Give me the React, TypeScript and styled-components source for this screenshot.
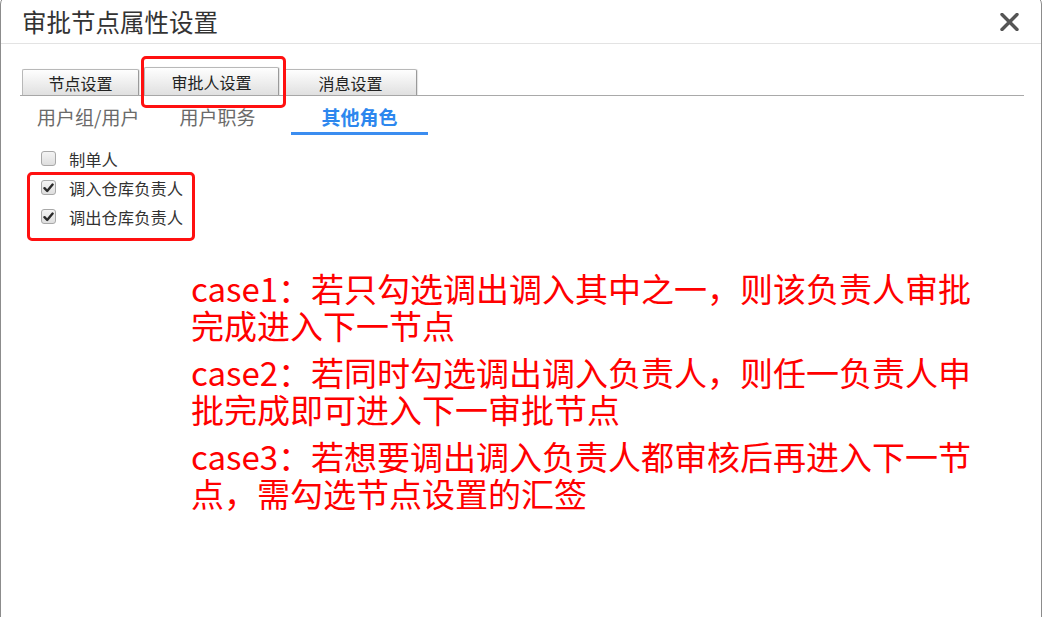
import React from "react";
import styled, { createGlobalStyle } from "styled-components";

const Global = createGlobalStyle`
  html, body { margin: 0; padding: 0; background: #fff; }
  body { font-family: "Noto Sans CJK SC", "Noto Sans", sans-serif; overflow: hidden; }
  * { box-sizing: border-box; }
`;

const Dialog = styled.div`
  position: relative;
  width: 1042px;
  height: 640px;
  margin-top: -4px;
  border: 1.5px solid #8c8c8c;
  border-radius: 8px;
  background: #fff;
  overflow: hidden;
`;

const Header = styled.div`
  height: 47px;
  padding: 3px 20px 0 21px;
  display: flex;
  align-items: center;
  justify-content: space-between;
  border-bottom: 1px solid #e3e3e3;
`;

const Title = styled.div`
  font-size: 24.5px;
  color: #333;
  line-height: 30px;
`;

const CloseBtn = styled.div`
  width: 20px;
  height: 20px;
  display: flex;
  align-items: center;
  justify-content: center;
  margin-right: 2px;
`;

const Body = styled.div`
  padding: 0 17px 0 19px;
`;

const TabBar = styled.div`
  margin-top: 23px;
  height: 29px;
  display: flex;
  align-items: flex-end;
  gap: 5px;
  padding-left: 2px;
  border-bottom: 1px solid #a9a9a9;
`;

const Tab = styled.div<{ $w: number; $active?: boolean }>`
  width: ${(p) => p.$w}px;
  height: ${(p) => (p.$active ? 28 : 26)}px;
  display: flex;
  align-items: center;
  justify-content: center;
  padding-top: ${(p) => (p.$active ? 1 : 0)}px;
  font-size: 16px;
  color: #222;
  border: 1px solid #b8b8b8;
  border-bottom: none;
  border-right-color: #9a9a9a;
  border-radius: 2px 2px 0 0;
  background: linear-gradient(#fefefe, #ececec 60%, #e0e0e0);
  box-shadow: 1px 0 1px rgba(0, 0, 0, 0.12);
`;

const SubTabBar = styled.div`
  display: flex;
  height: 39px;
`;

const SubTab = styled.div<{ $pl: number; $pr: number; $active?: boolean }>`
  padding: 8px ${(p) => p.$pr}px 4px ${(p) => p.$pl}px;
  font-size: 19px;
  line-height: 25px;
  color: ${(p) => (p.$active ? "#2d87ee" : "#6a6a6a")};
  font-weight: ${(p) => (p.$active ? 700 : 400)};
  border-bottom: 3px solid ${(p) => (p.$active ? "#3b8df0" : "transparent")};
  white-space: nowrap;
`;

const CheckList = styled.div`
  margin-top: 9px;
  padding-left: 21px;
  display: flex;
  flex-direction: column;
`;

const CheckRow = styled.label`
  height: 29px;
  display: flex;
  align-items: center;
  gap: 13px;
  font-size: 16.3px;
  color: #333;
`;

const Box = styled.span`
  width: 15px;
  height: 15px;
  border: 1px solid #a8a8a8;
  border-radius: 3px;
  background: linear-gradient(#f4f4f4, #dedede);
  display: flex;
  align-items: center;
  justify-content: center;
`;

const Notes = styled.div`
  margin-top: 39px;
  margin-left: 171px;
  width: 790px;
  color: #ff0000;
  font-size: 33px;
  line-height: 37px;
`;

const Para = styled.p`
  margin: 0 0 10px 0;
`;

const Mark = styled.div<{ $x: number; $y: number; $w: number; $h: number }>`
  position: absolute;
  left: ${(p) => p.$x}px;
  top: ${(p) => p.$y}px;
  width: ${(p) => p.$w}px;
  height: ${(p) => p.$h}px;
  border: 3px solid #ff1010;
  border-radius: 5px;
  pointer-events: none;
`;

const Check = () => (
  <svg width="11" height="10" viewBox="0 0 11 10">
    <path d="M1.5 5.2 L4.2 8 L9.6 1.6" fill="none" stroke="#2a2a2a" strokeWidth="2.4" strokeLinecap="round" strokeLinejoin="round" />
  </svg>
);

const Checkbox = ({ checked, label }: { checked?: boolean; label: string }) => (
  <CheckRow>
    <Box>{checked && <Check />}</Box>
    <span>{label}</span>
  </CheckRow>
);

export default function App() {
  return (
    <>
      <Global />
      <Dialog>
        <Header>
          <Title>审批节点属性设置</Title>
          <CloseBtn>
            <svg width="19" height="18" viewBox="0 0 19 18">
              <path d="M2 1.5 L17 16.5 M17 1.5 L2 16.5" stroke="#555" strokeWidth="3.4" strokeLinecap="round" />
            </svg>
          </CloseBtn>
        </Header>
        <Body>
          <TabBar>
            <Tab $w={117}>节点设置</Tab>
            <Tab $w={135} $active>审批人设置</Tab>
            <Tab $w={133}>消息设置</Tab>
          </TabBar>
          <SubTabBar>
            <SubTab $pl={17} $pr={13}>用户组/用户</SubTab>
            <SubTab $pl={27} $pr={36}>用户职务</SubTab>
            <SubTab $pl={30} $pr={31} $active>其他角色</SubTab>
          </SubTabBar>
          <CheckList>
            <Checkbox label="制单人" />
            <Checkbox checked label="调入仓库负责人" />
            <Checkbox checked label="调出仓库负责人" />
          </CheckList>
          <Notes>
            <Para>case1：若只勾选调出调入其中之一，则该负责人审批完成进入下一节点</Para>
            <Para>case2：若同时勾选调出调入负责人，则任一负责人申批完成即可进入下一审批节点</Para>
            <Para>case3：若想要调出调入负责人都审核后再进入下一节点，需勾选节点设置的汇签</Para>
          </Notes>
        </Body>
        <Mark $x={140} $y={59} $w={145} $h={52} />
        <Mark $x={26} $y={175} $w={168} $h={69} />
      </Dialog>
    </>
  );
}
